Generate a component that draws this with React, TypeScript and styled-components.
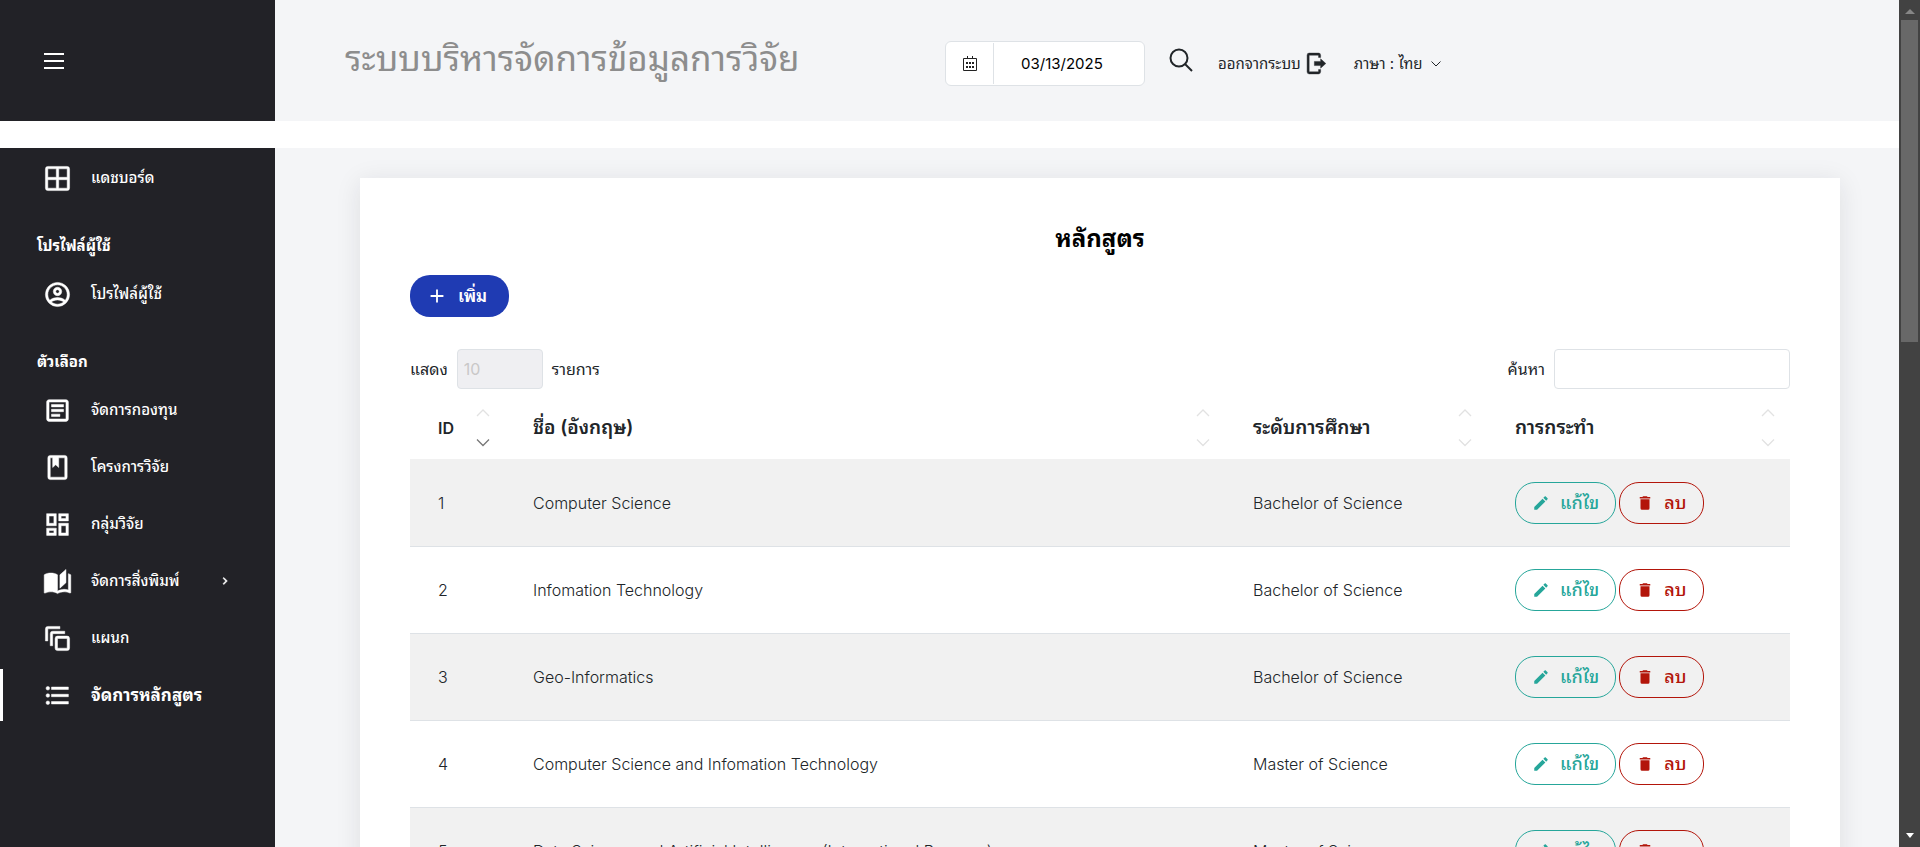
import React from "react";
import styled, { createGlobalStyle, css } from "styled-components";

const GlobalStyle = createGlobalStyle`
  *, *::before, *::after { box-sizing: border-box; }
  body {
    margin: 0;
    background: #fff;
    color: #212529;
    font-family: Inter, "Noto Sans Thai Looped", Loma, Waree, Garuda, "Noto Sans", sans-serif;
    font-size: 16px;
    line-height: 20px;
  }
  button, input, select { font: inherit; color: inherit; }
`;

const Shell = styled.div`
  display: flex;
  height: 100vh;
`;

const Page = styled.div`
  flex: 1;
  min-width: 0;
  overflow: hidden;
`;

const TopBar = styled.header`
  display: flex;
  height: 121px;
  margin-bottom: 27px;
  background: #f4f5f7;
`;

const Brand = styled.div`
  display: flex;
  align-items: center;
  width: 275px;
  padding-left: 44px;
  background: #222227;
`;

const MenuButton = styled.button`
  display: flex;
  flex-direction: column;
  gap: 5px;
  padding: 0;
  border: 0;
  background: none;
`;

const MenuLine = styled.span`
  width: 20px;
  height: 2px;
  background: #fff;
`;

const TopContent = styled.div`
  display: flex;
  flex: 1;
  align-items: center;
  padding: 6px 0 0 70px;
`;

const SiteTitle = styled.h1`
  width: 600px;
  margin: 0 0 12px;
  color: #8d8d8d;
  font-size: 35px;
  font-weight: 400;
  line-height: 48px;
  white-space: nowrap;
`;

const DateField = styled.label`
  display: flex;
  align-items: center;
  width: 200px;
  height: 45px;
  border: 1px solid #dee2e6;
  border-radius: 6px;
  background: #fff;
`;

const DateIcon = styled.span`
  display: flex;
  align-items: center;
  justify-content: center;
  width: 48px;
  height: 41px;
  border-right: 1px solid #dee2e6;
`;

const DateInput = styled.input`
  flex: 1;
  min-width: 0;
  padding: 0 0 0 27px;
  border: 0;
  background: none;
  color: #000;
  font-size: 15px;
`;

const IconButton = styled.button`
  display: flex;
  margin: 0 25px 8px 24px;
  padding: 0;
  border: 0;
  background: none;
`;

const TopLink = styled.a<{ $gap: string }>`
  display: flex;
  align-items: center;
  gap: ${(p) => p.$gap};
  margin-right: 24px;
  color: #212529;
  font-size: 15px;
  text-decoration: none;
  white-space: nowrap;
`;

const Body = styled.div`
  display: flex;
  min-height: calc(100vh - 148px);
`;

const Sidebar = styled.nav`
  flex: none;
  width: 275px;
  padding-top: 4px;
  background: #222227;
  color: #fff;
`;

const NavGroup = styled.ul`
  display: flex;
  flex-direction: column;
  gap: 5px;
  margin: 0;
  padding: 0;
  list-style: none;
`;

const NavHeading = styled.h2`
  margin: 0;
  padding: 30px 0 10px 37px;
  font-size: 15px;
  font-weight: 700;
  line-height: 24px;
`;

const NavLink = styled.a<{ $active?: boolean }>`
  display: flex;
  align-items: center;
  gap: 19px;
  height: 52px;
  padding-left: ${(p) => (p.$active ? "40px" : "43px")};
  border-left: ${(p) => (p.$active ? "3px solid #fff" : "0")};
  color: #fff;
  font-size: ${(p) => (p.$active ? "17px" : "15px")};
  font-weight: ${(p) => (p.$active ? 700 : 500)};
  text-decoration: none;
`;

const NavText = styled.span`
  flex: 1;
`;

const Arrow = styled.span`
  display: flex;
  margin-right: 43px;
`;

const Main = styled.main`
  flex: 1;
  min-width: 0;
  padding: 30px 59px 30px 85px;
  background: #f4f5f7;
`;

const Card = styled.section`
  padding: 44px 50px;
  background: #fff;
  box-shadow: 0 4px 24px rgba(34, 34, 39, 0.1);
`;

const CardTitle = styled.h2`
  margin: 0 0 20px;
  color: #000;
  font-size: 24px;
  font-weight: 700;
  line-height: 33px;
  text-align: center;
`;

const AddLink = styled.a`
  display: inline-flex;
  align-items: center;
  gap: 10px;
  height: 42px;
  padding: 0 22px 0 16px;
  border-radius: 20px;
  background: #1f3bb3;
  color: #fff;
  font-size: 17px;
  font-weight: 600;
  text-decoration: none;
`;

const Controls = styled.div`
  display: flex;
  align-items: center;
  justify-content: space-between;
  margin-top: 32px;
`;

const ControlLabel = styled.label`
  display: flex;
  align-items: center;
  gap: 9px;
`;

const field = css`
  height: 40px;
  border: 1px solid #dee2e6;
  border-radius: 4px;
`;

const LengthSelect = styled.select`
  ${field}
  width: 86px;
  padding: 0 6px;
  appearance: none;
  background: #efeff2;
  color: #c9c8c8;
`;

const SearchInput = styled.input`
  ${field}
  width: 236px;
  padding: 0 8px;
  background: #fff;
`;

const Table = styled.table`
  width: 100%;
  margin-top: 7px;
  table-layout: fixed;
  border-collapse: separate;
  border-spacing: 0;
`;

const HeadCell = styled.th<{ $width?: string; $latin?: boolean }>`
  width: ${(p) => p.$width ?? "auto"};
  height: 63px;
  padding: 0 15px 0 28px;
  font-size: ${(p) => (p.$latin ? "16px" : "19px")};
  font-weight: 600;
  text-align: left;
`;

const HeadInner = styled.div`
  display: flex;
  align-items: center;
  justify-content: space-between;
`;

const Cell = styled.td`
  height: 87px;
  padding: 0 14px 0 28px;
  border-bottom: 1px solid #dee2e6;
  font-weight: 300;
`;

const Row = styled.tr`
  &:nth-child(odd) { background: #f1f1f1; }
  &:first-child td { height: 88px; }
`;

const Actions = styled.div`
  display: flex;
  gap: 3px;
`;

const ActionButton = styled.button<{ $tone: string }>`
  display: flex;
  align-items: center;
  gap: 10px;
  height: 42px;
  padding: 0 16px;
  border: 1px solid ${(p) => p.$tone};
  border-radius: 20px;
  background: none;
  color: ${(p) => p.$tone};
  font-size: 18px;
  font-weight: 500;
  white-space: nowrap;
`;

const Scrollbar = styled.div`
  display: flex;
  flex: none;
  flex-direction: column;
  align-items: center;
  width: 21px;
  padding: 8px 1px;
  background: #424242;
`;

const Thumb = styled.div`
  width: 17px;
  height: 38vh;
  margin: 6px 0 auto;
  background: #686868;
`;

const ICONS = {
  grid: "M4,2H20A2,2 0 0,1 22,4V20A2,2 0 0,1 20,22H4A2,2 0 0,1 2,20V4A2,2 0 0,1 4,2M4,4V11H11V4H4M4,20H11V13H4V20M20,20V13H13V20H20M20,4H13V11H20V4Z",
  account:
    "M12,2A10,10 0 0,0 2,12A10,10 0 0,0 12,22A10,10 0 0,0 22,12A10,10 0 0,0 12,2M7.07,18.28C7.5,17.38 10.12,16.5 12,16.5C13.88,16.5 16.5,17.38 16.93,18.28C15.57,19.36 13.86,20 12,20C10.14,20 8.43,19.36 7.07,18.28M18.36,16.83C16.93,15.09 13.46,14.5 12,14.5C10.54,14.5 7.07,15.09 5.64,16.83C4.62,15.5 4,13.82 4,12C4,7.59 7.59,4 12,4C16.41,4 20,7.59 20,12C20,13.82 19.38,15.5 18.36,16.83M12,6C10.06,6 8.5,7.56 8.5,9.5C8.5,11.44 10.06,13 12,13C13.94,13 15.5,11.44 15.5,9.5C15.5,7.56 13.94,6 12,6M12,11A1.5,1.5 0 0,1 10.5,9.5A1.5,1.5 0 0,1 12,8A1.5,1.5 0 0,1 13.5,9.5A1.5,1.5 0 0,1 12,11Z",
  note: "M5,3C3.89,3 3,3.89 3,5V19C3,20.11 3.89,21 5,21H19C20.11,21 21,20.11 21,19V5C21,3.89 20.11,3 19,3H5M5,5H19V19H5V5M7,7V9H17V7H7M7,11V13H17V11H7M7,15V17H14V15H7Z",
  book: "M18,2A2,2 0 0,1 20,4V20A2,2 0 0,1 18,22H6A2,2 0 0,1 4,20V4A2,2 0 0,1 6,2H18M18,4H13V12L10.5,9.75L8,12V4H6V20H18V4Z",
  dashboard:
    "M19,5V7H15V5H19M9,5V11H5V5H9M19,13V19H15V13H19M9,17V19H5V17H9M21,3H13V9H21V3M11,3H3V13H11V3M21,11H13V21H21V11M11,15H3V21H11V15Z",
  openBook:
    "M19,2L14,6.5V17.5L19,13V2M6.5,5C4.55,5 2.45,5.4 1,6.5V21.16C1,21.41 1.25,21.66 1.5,21.66C1.6,21.66 1.65,21.59 1.75,21.59C3.1,20.94 5.05,20.5 6.5,20.5C8.45,20.5 10.55,20.9 12,22C13.35,21.15 15.8,20.5 17.5,20.5C19.15,20.5 20.85,20.81 22.25,21.56C22.35,21.61 22.4,21.59 22.5,21.59C22.75,21.59 23,21.34 23,21.09V6.5C22.4,6.05 21.75,5.75 21,5.5V19C19.9,18.65 18.7,18.5 17.5,18.5C15.8,18.5 13.35,19.15 12,20V6.5C10.55,5.4 8.45,5 6.5,5Z",
  stack:
    "M4,2H14V4H4V14H2V4A2,2 0 0,1 4,2M8,6H18V8H8V18H6V8A2,2 0 0,1 8,6M12,10H20A2,2 0 0,1 22,12V20A2,2 0 0,1 20,22H12A2,2 0 0,1 10,20V12A2,2 0 0,1 12,10M12,12V20H20V12H12Z",
  list: "M7,5H21V7H7V5M7,13V11H21V13H7M4,4.5A1.5,1.5 0 0,1 5.5,6A1.5,1.5 0 0,1 4,7.5A1.5,1.5 0 0,1 2.5,6A1.5,1.5 0 0,1 4,4.5M4,10.5A1.5,1.5 0 0,1 5.5,12A1.5,1.5 0 0,1 4,13.5A1.5,1.5 0 0,1 2.5,12A1.5,1.5 0 0,1 4,10.5M7,19V17H21V19H7M4,16.5A1.5,1.5 0 0,1 5.5,18A1.5,1.5 0 0,1 4,19.5A1.5,1.5 0 0,1 2.5,18A1.5,1.5 0 0,1 4,16.5Z",
  plus: "M19,13H13V19H11V13H5V11H11V5H13V11H19V13Z",
  pencil:
    "M20.71,7.04C21.1,6.65 21.1,6 20.71,5.63L18.37,3.29C18,2.9 17.35,2.9 16.96,3.29L15.12,5.12L18.87,8.87M3,17.25V21H6.75L17.81,9.93L14.06,6.18L3,17.25Z",
  trash: "M19,4H15.5L14.5,3H9.5L8.5,4H5V6H19M6,19A2,2 0 0,0 8,21H16A2,2 0 0,0 18,19V7H6V19Z",
  chevron: "M8.59,16.58L13.17,12L8.59,7.41L10,6L16,12L10,18L8.59,16.58Z",
  logout:
    "M15,16.5V14H9V10H15V7.5L20,12L15,16.5M4,2H13A2,2 0 0,1 15,4V6.2H13V4H4V20H13V17.8H15V20A2,2 0 0,1 13,22H4A2,2 0 0,1 2,20V4A2,2 0 0,1 4,2Z",
};

type IconName = keyof typeof ICONS;

const Icon = ({ name, size, weight = 0 }: { name: IconName; size: number; weight?: number }) => (
  <svg
    width={size}
    height={size}
    viewBox="0 0 24 24"
    fill="currentColor"
    stroke={weight ? "currentColor" : "none"}
    strokeWidth={weight}
    aria-hidden="true"
  >
    <path d={ICONS[name]} />
  </svg>
);

const CalendarIcon = () => (
  <svg width="16" height="16" viewBox="0 0 16 16" fill="none" stroke="#222" aria-hidden="true">
    <path d="M1.5 2.5h13v12h-13zM5.5 0v3M10.5 0v3" />
    <path d="M4 7h2m1 0h2m1 0h2M4 11h2m1 0h2m1 0h2" strokeWidth="2" />
  </svg>
);

const SearchIcon = () => (
  <svg width="24" height="24" viewBox="0 0 24 24" fill="none" stroke="#212529" strokeWidth="2" aria-hidden="true">
    <circle cx="10" cy="10" r="8.5" />
    <path d="M16 16l7 7" />
  </svg>
);

const CaretIcon = () => (
  <svg width="10" height="6" viewBox="0 0 10 6" fill="none" stroke="#212529" aria-hidden="true">
    <path d="M.5.5L5 5 9.5.5" />
  </svg>
);

const SortIcon = ({ down }: { down?: boolean }) => (
  <svg width="14" height="38" viewBox="0 0 14 38" fill="none" strokeWidth="1.3" aria-hidden="true">
    <path d="M1 7l6-6 6 6" stroke="#e2e2e2" />
    <path d="M1 30.5l6 6 6-6" stroke={down ? "#777" : "#e2e2e2"} />
  </svg>
);

interface NavItem {
  icon: IconName;
  label: string;
  active?: boolean;
  nested?: boolean;
}

const OPTIONS: NavItem[] = [
  { icon: "note", label: "จัดการกองทุน" },
  { icon: "book", label: "โครงการวิจัย" },
  { icon: "dashboard", label: "กลุ่มวิจัย" },
  { icon: "openBook", label: "จัดการสิ่งพิมพ์", nested: true },
  { icon: "stack", label: "แผนก" },
  { icon: "list", label: "จัดการหลักสูตร", active: true },
];

const NavEntry = ({ icon, label, active, nested }: NavItem) => (
  <li>
    <NavLink href="#" $active={active}>
      <Icon name={icon} size={29} weight={0.4} />
      <NavText>{label}</NavText>
      {nested && (
        <Arrow>
          <Icon name="chevron" size={14} weight={1} />
        </Arrow>
      )}
    </NavLink>
  </li>
);

const COLUMNS = [
  { label: "ID", width: "95px", down: true, latin: true },
  { label: "ชื่อ (อังกฤษ)" },
  { label: "ระดับการศึกษา", width: "262px" },
  { label: "การกระทำ", width: "303px" },
];

const PROGRAMS = [
  ["Computer Science", "Bachelor of Science"],
  ["Infomation Technology", "Bachelor of Science"],
  ["Geo-Informatics", "Bachelor of Science"],
  ["Computer Science and Infomation Technology", "Master of Science"],
  ["Data Science and Artificial Intelligence (International Program)", "Master of Science"],
];

export default function App() {
  return (
    <>
      <GlobalStyle />
      <Shell>
        <Page>
          <TopBar>
            <Brand>
              <MenuButton aria-label="เมนู">
                <MenuLine />
                <MenuLine />
                <MenuLine />
              </MenuButton>
            </Brand>
            <TopContent>
              <SiteTitle>ระบบบริหารจัดการข้อมูลการวิจัย</SiteTitle>
              <DateField>
                <DateIcon>
                  <CalendarIcon />
                </DateIcon>
                <DateInput aria-label="วันที่" defaultValue="03/13/2025" />
              </DateField>
              <IconButton aria-label="ค้นหา">
                <SearchIcon />
              </IconButton>
              <TopLink href="#" $gap="4px">
                ออกจากระบบ
                <Icon name="logout" size={25} weight={0.4} />
              </TopLink>
              <TopLink href="#" $gap="9px">
                ภาษา : ไทย
                <CaretIcon />
              </TopLink>
            </TopContent>
          </TopBar>
          <Body>
            <Sidebar>
              <NavGroup>
                <NavEntry icon="grid" label="แดชบอร์ด" />
              </NavGroup>
              <NavHeading>โปรไฟล์ผู้ใช้</NavHeading>
              <NavGroup>
                <NavEntry icon="account" label="โปรไฟล์ผู้ใช้" />
              </NavGroup>
              <NavHeading>ตัวเลือก</NavHeading>
              <NavGroup>
                {OPTIONS.map((item) => (
                  <NavEntry key={item.label} {...item} />
                ))}
              </NavGroup>
            </Sidebar>
            <Main>
              <Card>
                <CardTitle>หลักสูตร</CardTitle>
                <AddLink href="#">
                  <Icon name="plus" size={22} />
                  เพิ่ม
                </AddLink>
                <Controls>
                  <ControlLabel>
                    แสดง
                    <LengthSelect defaultValue="10">
                      <option>10</option>
                      <option>25</option>
                      <option>50</option>
                    </LengthSelect>
                    รายการ
                  </ControlLabel>
                  <ControlLabel>
                    ค้นหา
                    <SearchInput type="search" />
                  </ControlLabel>
                </Controls>
                <Table>
                  <thead>
                    <tr>
                      {COLUMNS.map((c) => (
                        <HeadCell key={c.label} $width={c.width} $latin={c.latin}>
                          <HeadInner>
                            {c.label}
                            <SortIcon down={c.down} />
                          </HeadInner>
                        </HeadCell>
                      ))}
                    </tr>
                  </thead>
                  <tbody>
                    {PROGRAMS.map(([name, level], i) => (
                      <Row key={name}>
                        <Cell>{i + 1}</Cell>
                        <Cell>{name}</Cell>
                        <Cell>{level}</Cell>
                        <Cell>
                          <Actions>
                            <ActionButton $tone="#26a69a">
                              <Icon name="pencil" size={18} />
                              แก้ไข
                            </ActionButton>
                            <ActionButton $tone="#b3150a">
                              <Icon name="trash" size={18} />
                              ลบ
                            </ActionButton>
                          </Actions>
                        </Cell>
                      </Row>
                    ))}
                  </tbody>
                </Table>
              </Card>
            </Main>
          </Body>
        </Page>
        <Scrollbar aria-hidden="true">
          <svg width="10" height="6" viewBox="0 0 10 6" fill="#868686">
            <path d="M0 6l5-5 5 5z" />
          </svg>
          <Thumb />
          <svg width="8" height="6" viewBox="0 0 8 6" fill="#fff">
            <path d="M0 0h8L4 5z" />
          </svg>
        </Scrollbar>
      </Shell>
    </>
  );
}
